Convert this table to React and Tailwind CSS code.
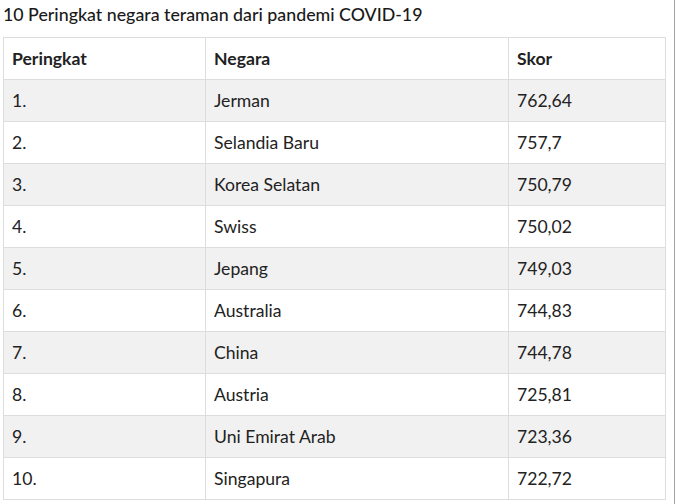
import React from "react";

const rows = [
  ["1.", "Jerman", "762,64"],
  ["2.", "Selandia Baru", "757,7"],
  ["3.", "Korea Selatan", "750,79"],
  ["4.", "Swiss", "750,02"],
  ["5.", "Jepang", "749,03"],
  ["6.", "Australia", "744,83"],
  ["7.", "China", "744,78"],
  ["8.", "Austria", "725,81"],
  ["9.", "Uni Emirat Arab", "723,36"],
  ["10.", "Singapura", "722,72"],
];

export default function App() {
  return (
    <div className="w-[675px] h-[504px] bg-white border-r border-[#a3a3a3] text-[#222] font-['Lato',sans-serif] overflow-hidden">
      <div className="pl-[3px] pt-[3px]">
        <h2 className="text-[17.8px] leading-[22px] font-medium text-[#1a1a1a]">10 Peringkat negara teraman dari pandemi COVID-19</h2>
        <table className="mt-[12px] w-[662px] border-collapse text-[17.6px] table-fixed">
          <colgroup>
            <col className="w-[202px]" />
            <col className="w-[303px]" />
            <col className="w-[157px]" />
          </colgroup>
          <thead>
            <tr className="h-[42px]">
              <th className="border border-[#ddd] text-left font-bold px-[8px] pt-[2px]">Peringkat</th>
              <th className="border border-[#ddd] text-left font-bold px-[8px] pt-[2px]">Negara</th>
              <th className="border border-[#ddd] text-left font-bold px-[8px] pt-[2px]">Skor</th>
            </tr>
          </thead>
          <tbody>
            {rows.map((r, i) => (
              <tr key={i} className={`h-[42px] ${i % 2 === 0 ? "bg-[#f1f1f1]" : "bg-white"}`}>
                {r.map((c, j) => (
                  <td key={j} className="border border-[#ddd] px-[8px] pt-[2px]">{c}</td>
                ))}
              </tr>
            ))}
          </tbody>
        </table>
      </div>
    </div>
  );
}
